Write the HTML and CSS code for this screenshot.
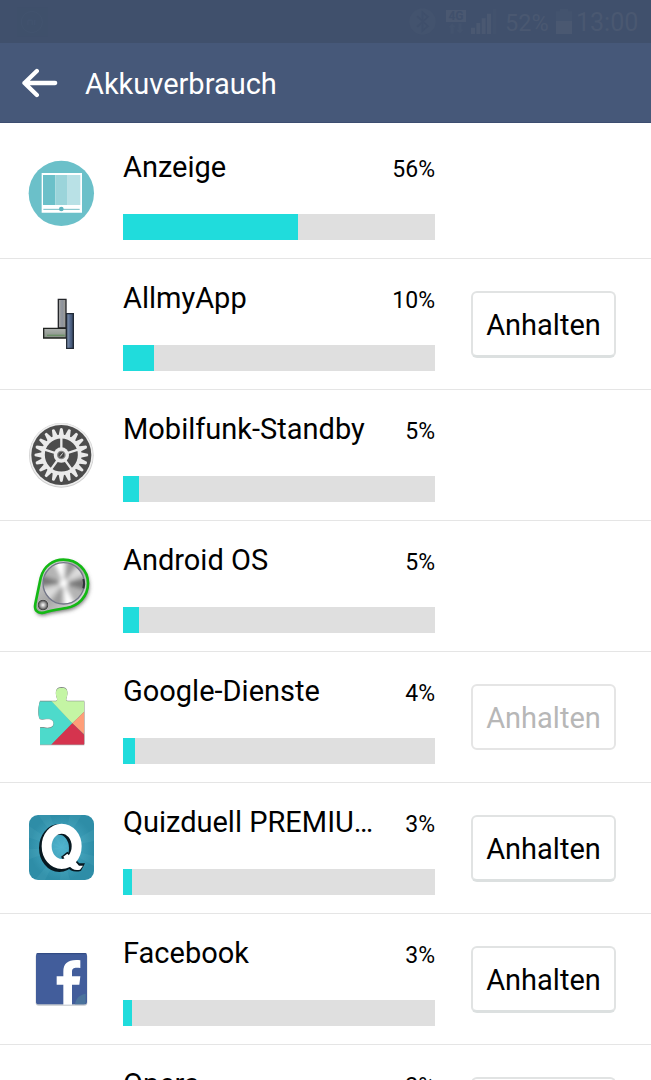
FILE: index.html
```html
<!DOCTYPE html>
<html lang="de">
<head>
<meta charset="utf-8">
<title>Akkuverbrauch</title>
<link rel="stylesheet" href="styles.css">
</head>
<body>
<div class="screen">
  <div class="statusbar">
    <svg class="notification" viewBox="0 0 94 90"><rect width="94" height="90" fill="#3f506b"/><circle cx="45" cy="45" r="32" fill="none" stroke="#42536e" stroke-width="3"/><path d="M33 55V39h13v16M54 39v16" fill="none" stroke="#43546f" stroke-width="3"/></svg>
    <svg class="bluetooth" viewBox="0 0 80 80"><circle cx="40" cy="40" r="39" fill="#43536e"/><path d="M24 24 56 54 40 67V13L56 26 24 56" fill="none" stroke="#3f4f6b" stroke-width="5"/></svg>
    <div class="network"><span>4G</span><svg viewBox="0 0 48 34"><path d="M12 1 0 13h7v20h10V13h7ZM36 33 24 21h7V1h10v20h7Z" fill="#43536e"/></svg></div>
    <svg class="signal" viewBox="0 0 78 75"><path d="M0 56h12v19H0ZM16 42h12v33H16ZM32 28h12v47H32ZM48 14h12v61H48Z" fill="#4a5871"/><path d="M65 0h12v75H65Z" fill="#42526d"/></svg>
    <span class="level">52%</span>
    <svg class="battery" viewBox="0 0 48 75"><path d="M12 0h24v7h12v29H0V7h12Z" fill="#43536e"/><path d="M0 36h48v39H0Z" fill="#4a5871"/></svg>
    <span class="clock">13:00</span>
  </div>
  <header class="header">
    <svg class="back" viewBox="0 0 110 90"><path d="M102 45H10M47 9 10 45 47 81" fill="none" stroke="#fff" stroke-width="13" stroke-linecap="round" stroke-linejoin="round"/></svg>
    <h1>Akkuverbrauch</h1>
  </header>
  <main class="list">
    <section class="row">
      <svg class="icon" viewBox="0 0 252 252">
        <circle cx="124" cy="130" r="98" fill="#6bc0c9"/>
        <path d="M65 69h121v119H65Z" fill="#fff"/>
        <path d="M69 75h37v90H69Z" fill="#6bc0c9"/><path d="M106 75h37v90h-37Z" fill="#9bd4da"/><path d="M143 75h38v90h-38Z" fill="#b9e1e6"/>
        <path d="M70 178h109" stroke="#75bec6" stroke-width="3"/><circle cx="124" cy="177" r="7" fill="#5eb5bf"/>
      </svg>
      <div class="usage"><div class="label"><span class="name">Anzeige</span><span class="percent">56%</span></div><div class="bar"><div class="fill" style="width:56%"></div></div></div>
    </section>
    <section class="row">
      <svg class="icon" viewBox="-30 -12 252 252">
        <defs>
          <linearGradient id="pillar"><stop offset="0" stop-color="#aaa9a5"/><stop offset=".5" stop-color="#8c929c"/><stop offset="1" stop-color="#a2a097"/></linearGradient>
          <linearGradient id="blue"><stop offset="0" stop-color="#879bb6"/><stop offset=".5" stop-color="#566a8e"/><stop offset="1" stop-color="#384964"/></linearGradient>
          <linearGradient id="beam" x2="0" y2="1"><stop offset="0" stop-color="#adb0ae"/><stop offset="1" stop-color="#849083"/></linearGradient>
        </defs>
        <path d="M85 43h23v86H85Z" fill="url(#pillar)" stroke="#24262a" stroke-width="4"/>
        <path d="M41 130h68v29H41Z" fill="url(#beam)" stroke="#202320" stroke-width="4"/>
        <path d="M51 151h53" stroke="#6c9068" stroke-width="4"/>
        <path d="M110 86h20v104h-20Z" fill="url(#blue)" stroke="#222a36" stroke-width="4"/>
      </svg>
      <div class="usage"><div class="label"><span class="name">AllmyApp</span><span class="percent">10%</span></div><div class="bar"><div class="fill" style="width:10%"></div></div></div>
      <button class="stop">Anhalten</button>
    </section>
    <section class="row">
      <svg class="icon" viewBox="0 -9 252 252">
        <defs><path id="tooth" d="M-9-54-4-79Q0-83 4-79L9-54Z"/><g id="teeth"><use href="#tooth"/><use href="#tooth" transform="rotate(18)"/><use href="#tooth" transform="rotate(36)"/><use href="#tooth" transform="rotate(54)"/><use href="#tooth" transform="rotate(72)"/></g></defs>
        <circle cx="124" cy="121" r="97" fill="#cfcfcf"/><circle cx="124" cy="120" r="95" fill="#eee"/><circle cx="124" cy="120" r="90" fill="#4c4c4c"/>
        <g transform="translate(124 120)" fill="#eaeaea">
          <use href="#teeth"/><use href="#teeth" transform="rotate(90)"/><use href="#teeth" transform="rotate(180)"/><use href="#teeth" transform="rotate(270)"/>
          <circle r="55" fill="none" stroke="#eaeaea" stroke-width="11"/>
          <path d="M0 0V-53M0 0 50-16M0 0 31 43M0 0-31 43M0 0-50-16" stroke="#eaeaea" stroke-width="7"/>
          <circle r="23"/><circle r="13" fill="#858585"/><circle r="9" fill="#444"/><path d="m-4 5 8-10" stroke="#ddd" stroke-width="3"/>
        </g>
      </svg>
      <div class="usage"><div class="label"><span class="name">Mobilfunk-Standby</span><span class="percent">5%</span></div><div class="bar"><div class="fill" style="width:5%"></div></div></div>
    </section>
    <section class="row">
      <svg class="icon" viewBox="0 -6 252 252">
        <defs>
          <filter id="soft" x="-30%" y="-30%" width="160%" height="160%"><feGaussianBlur stdDeviation="6"/></filter>
          <clipPath id="dial"><circle cx="131" cy="115" r="61"/></clipPath>
          <linearGradient id="plate" x1="0" y1="0" x2="1" y2="1"><stop offset="0" stop-color="#e5e5e5"/><stop offset=".5" stop-color="#a5a5a5"/><stop offset="1" stop-color="#f3f3f3"/></linearGradient>
          <radialGradient id="bolt"><stop offset="0" stop-color="#fff"/><stop offset=".5" stop-color="#999"/><stop offset=".85" stop-color="#444"/><stop offset="1" stop-color="#bbb"/></radialGradient>
        </defs>
        <path d="M46 176 62 99C71 62 100 44 130 44c42 0 74 31 74 71 0 40-29 67-65 74-28 5-48 8-68 14-20 4-29-9-25-27Z" transform="translate(3 7)" fill="#666" filter="url(#soft)"/>
        <path d="M46 176 62 99C71 62 100 44 130 44c42 0 74 31 74 71 0 40-29 67-65 74-28 5-48 8-68 14-20 4-29-9-25-27Z" fill="url(#plate)" stroke="#13b914" stroke-width="8"/>
        <g clip-path="url(#dial)">
          <path d="M70 54h122v122H70Z" fill="#b4b4b4"/>
          <g filter="url(#soft)">
            <path d="M131 115 95 40h40ZM131 115 133 195h42Z" fill="#fff"/>
            <path d="M131 115 60 90v32ZM131 115 205 98v40Z" fill="#777"/>
            <path d="M131 115 62 135l14 42ZM131 115 178 50l22 35Z" fill="#ddd"/>
            <path d="M131 115 88 185l33 5ZM131 115 145 40l30 17Z" fill="#9b9b9b"/>
            <circle cx="131" cy="115" r="12" fill="#fff"/>
          </g>
        </g>
        <circle cx="131" cy="115" r="62" fill="none" stroke="#747789" stroke-width="4"/>
        <path d="M190 102q5 13 0 28" fill="none" stroke="#30343a" stroke-width="6"/>
        <circle cx="69" cy="180" r="17" fill="url(#bolt)"/>
      </svg>
      <div class="usage"><div class="label"><span class="name">Android OS</span><span class="percent">5%</span></div><div class="bar"><div class="fill" style="width:5%"></div></div></div>
    </section>
    <section class="row">
      <svg class="icon" viewBox="0 -3 252 252">
        <defs><clipPath id="puzzle"><path id="piece" d="M60 79h46c7 0 6-7 4-12-5-15-3-29 15-29s20 15 15 29c-3 8-2 12 6 12h47v130H60v-50c8-3 14 1 22 1 12 0 19-6 19-14 0-10-7-15-18-15-9 0-17 5-25-1-4-12-4-34 2-51Z"/></clipPath></defs>
        <use href="#piece" y="2" fill="#aaa"/><use href="#piece" y="-2" fill="#7d8580"/>
        <g clip-path="url(#puzzle)"><path d="M50 79h46l61 66-65 66H50Z" fill="#4ddacb"/><path d="M92 76V30h68v45h36v32l-39 38Z" fill="#c4f5a4"/><path d="m157 145 40-39v76Z" fill="#ff9e78"/><path d="m157 145 38 37v29H92Z" fill="#d5344e"/></g>
      </svg>
      <div class="usage"><div class="label"><span class="name">Google-Dienste</span><span class="percent">4%</span></div><div class="bar"><div class="fill" style="width:4%"></div></div></div>
      <button class="stop" disabled>Anhalten</button>
    </section>
    <section class="row">
      <svg class="icon" viewBox="0 -3 252 252">
        <defs><radialGradient id="tile" cy=".5"><stop offset="0" stop-color="#50b4ce"/><stop offset="1" stop-color="#2e8da7"/></radialGradient><clipPath id="tileclip"><rect x="27" y="27" width="195" height="195" rx="27"/></clipPath></defs>
        <rect x="27" y="27" width="195" height="195" rx="27" fill="url(#tile)"/>
        <path clip-path="url(#tileclip)" d="M125 125 27 60V95ZM125 125 55 27h35ZM125 125 150 27h35ZM125 125 222 70v35ZM125 125 222 150v30ZM125 125 150 222h-30ZM125 125 75 222H45ZM125 125 27 160v-30Z" fill="#70c0d3" opacity=".13"/>
        <g fill="none" stroke="#071820"><ellipse cx="118" cy="126" rx="45" ry="56" stroke-width="32"/><path d="m127 153 15-12 22 21 13 13 13 0-9 17c-18 5-31-1-41-14Z" fill="#071820" stroke-width="6"/></g>
        <ellipse cx="125" cy="121" rx="45" ry="53" fill="none" stroke="#fff" stroke-width="30"/>
        <path d="m130 152 12-9 22 21 13 15 12 0-9 12c-15 4-25-1-34-14Z" fill="#fff"/>
      </svg>
      <div class="usage"><div class="label"><span class="name">Quizduell PREMIU…</span><span class="percent">3%</span></div><div class="bar"><div class="fill" style="width:3%"></div></div></div>
      <button class="stop">Anhalten</button>
    </section>
    <section class="row">
      <svg class="icon" viewBox="0 -3 252 252">
        <rect x="47" y="50" width="155" height="156" rx="9" fill="#c4c8cc"/><rect x="48" y="48" width="153" height="154" rx="8" fill="#425d9b"/><path d="M50 50h149" stroke="#304981" stroke-width="3"/>
        <path d="M165 202c2-16 12-28 32-32v28q-2 4-6 4Z" fill="#4b739c"/>
        <path d="M130 203v-60h-20v-25h20v-14c0-26 16-38 51-34v23c-19-2-25 0-25 12v13h25l-3 25h-22v60Z" fill="#fff"/>
      </svg>
      <div class="usage"><div class="label"><span class="name">Facebook</span><span class="percent">3%</span></div><div class="bar"><div class="fill" style="width:3%"></div></div></div>
      <button class="stop">Anhalten</button>
    </section>
    <section class="row">
      <div class="icon"></div>
      <div class="usage"><div class="label"><span class="name">Opera</span><span class="percent">2%</span></div><div class="bar"><div class="fill" style="width:2%"></div></div></div>
      <button class="stop">Anhalten</button>
    </section>
  </main>
</div>
</body>
</html>
```
FILE: styles.css
```css
* { box-sizing: border-box; }
body { margin: 0; background: #fff; color: #000; font-family: Roboto, sans-serif; }
.screen { width: 651px; height: 1080px; overflow: hidden; }
.statusbar { height: 43px; background: #40506c; display: flex; color: #4a5871; white-space: nowrap; }
.statusbar > * { flex: none; }
.notification { width: 31px; height: 30px; margin: 7px 0 0 17px; }
.bluetooth { width: 27px; height: 27px; margin: 8px 0 0 361px; }
.network { width: 20px; margin: 10px 0 0 10px; display: flex; flex-direction: column; align-items: center; }
.network span { width: 20px; height: 12px; background: #4a5871; color: #40506c; font: bold 12px/12px Roboto, sans-serif; text-align: center; }
.network svg { width: 16px; height: 11px; margin-top: 1px; }
.signal { width: 26px; height: 25px; margin: 9px 0 0 5px; }
.level { width: 44px; margin-left: 8px; font-size: 23.5px; line-height: 46px; }
.battery { width: 16px; height: 25px; margin: 9px 0 0 7px; }
.clock { margin-left: 4px; font-size: 25px; line-height: 46px; }
.header { height: 80px; background: #465879; border-bottom: 1px solid #3c4d70; display: flex; align-items: center; }
.back { width: 37px; height: 30px; margin-left: 21px; }
.header h1 { margin: 3px 0 0 27px; color: #fff; font-size: 29px; line-height: 40px; font-weight: 400; }
.list { padding-top: 5px; }
.row { height: 131px; border-bottom: 1px solid #e5e5e5; display: flex; }
.icon { width: 84px; height: 84px; margin: 22px 19px 0 20px; flex: none; }
.usage { width: 312px; padding-top: 20px; flex: none; }
.label { height: 40px; display: flex; justify-content: space-between; line-height: 38px; }
.name { width: 258px; overflow: hidden; text-overflow: ellipsis; white-space: nowrap; font-size: 29px; }
.percent { font-size: 23px; line-height: 43px; }
.bar { height: 26px; margin-top: 26px; background: #dfdfdf; }
.fill { height: 100%; background: #20dcdc; }
.stop { width: 145px; height: 67px; margin: 32px 0 0 36px; padding: 2px 0 0; flex: none; border: 2px solid #e1e3e3; border-bottom: 3px solid #dce0e0; border-radius: 6px; background: #fff; color: #000; font: 29px/40px Roboto, sans-serif; }
.stop:disabled { color: #b7b7b7; border-color: #e5e5e5; border-bottom-width: 2px; height: 66px; }
```
